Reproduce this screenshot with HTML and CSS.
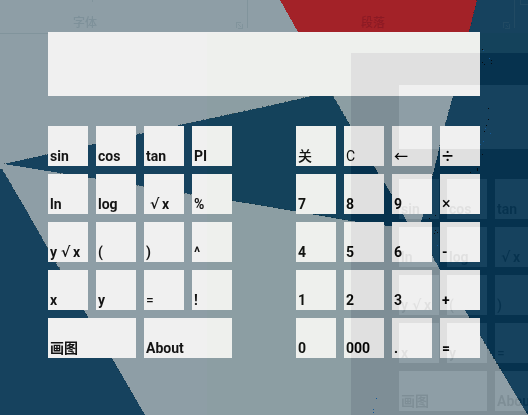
FILE: index.html
```html
<!DOCTYPE html>
<html lang="zh-CN">
<head>
<meta charset="utf-8">
<meta name="viewport" content="width=device-width, initial-scale=1">
<title>Calculator</title>
<link rel="stylesheet" href="styles.css">
</head>
<body>
<svg class="scene" viewBox="0 0 528 415" preserveAspectRatio="xMinYMin slice" aria-hidden="true">
  <rect class="haze" width="528" height="415"/>
  <g class="navy">
    <path d="M0 169H2L25 208L47 247L60 270L88 317L112 358L145 415H0Z"/>
    <path d="M4 164L180 125L264 107L312 96V80H324L333 96L350 125L378 173L392 195L403 214L417 240L391 226L385 225.500L351 221L264 206L190 194L142 186L60 173Z"/>
    <path d="M477 0L469 32L453 96L445 125L432 178L423 215L417 236V232L432 255L440 270L465 310L481 337L528 415V0Z"/>
  </g>
  <path class="red" d="M280 0L298 32L320 70H460L469 32L477 0Z"/>
  <g class="edge">
    <path d="M4 164L180 125L312 96M60 173L190 194L264 206L351 221M333 96L350 125L378 173L392 195"/>
    <path d="M477 0L469 32L453 96L445 125L432 178M432 255L440 270L465 310L481 337L528 415M2 169L47 247L88 317L145 415"/>
  </g>
  <g class="faint">
    <path d="M0 33.500H48M92.500 0V2M247.500 0V28M236.500 28V22.500H241M238 24L241 27M242.500 24V28.500H238"/>
    <path d="M514.500 0V28M503.500 28V22.500H509M506 25L508 27M509.500 24V28.500H505M520.500 0V4.500H528"/>
    <text x="73" y="27">字体</text>
  </g>
  <text class="on-red" x="361" y="27">段落</text>
</svg>

<main class="calc">
  <input class="display" type="text" aria-label="结果">
  <div class="pads">
    <div class="pad">
      <button class="key">sin</button><button class="key">cos</button><button class="key">tan</button><button class="key">PI</button>
      <button class="key">ln</button><button class="key">log</button><button class="key"><span class="root">√</span>x</button><button class="key">%</button>
      <button class="key">y<span class="root">√</span>x</button><button class="key">(</button><button class="key">)</button><button class="key">^</button>
      <button class="key">x</button><button class="key">y</button><button class="key regular">=</button><button class="key">!</button>
      <button class="key key-double han">画图</button><button class="key key-double">About</button>
    </div>
    <div class="pad numeric">
      <button class="key han">关</button><button class="key regular">C</button><button class="key han">←</button><button class="key large">÷</button>
      <button class="key">7</button><button class="key">8</button><button class="key">9</button><button class="key times">×</button>
      <button class="key">4</button><button class="key">5</button><button class="key">6</button><button class="key">-</button>
      <button class="key">1</button><button class="key">2</button><button class="key">3</button><button class="key">+</button>
      <button class="key">0</button><button class="key">000</button><button class="key">.</button><button class="key">=</button>
    </div>
  </div>
</main>

<svg class="scene tint" viewBox="0 0 528 415" preserveAspectRatio="xMinYMin slice" aria-hidden="true">
  <path d="M207 33H528V53H351V415H207Z"/>
</svg>

<div class="echo" aria-hidden="true">
  <div class="calc">
    <div class="display"></div>
    <div class="pads">
      <div class="pad">
        <span class="key">sin</span><span class="key">cos</span><span class="key">tan</span><span class="key"></span>
        <span class="key">ln</span><span class="key">log</span><span class="key"><span class="root">√</span>x</span><span class="key"></span>
        <span class="key">y<span class="root">√</span>x</span><span class="key">(</span><span class="key">)</span><span class="key"></span>
        <span class="key">x</span><span class="key">y</span><span class="key regular">=</span><span class="key"></span>
        <span class="key key-double han">画图</span><span class="key key-double">About</span>
      </div>
      <div class="pad"></div>
    </div>
  </div>
</div>

<svg class="scene specks" viewBox="0 0 528 415" preserveAspectRatio="xMinYMin slice" aria-hidden="true">
  <path class="dark" d="M482 49h1v1h-1zM482 62h1v1h-1zM484 64h1v1h-1zM491 60h1v1h-1zM491 63h1v1h-1zM488 108h1v1h-1zM488 119h1v1h-1zM486 125h1v1h-1zM484 131h1v1h-1zM482 154h1v1h-1zM477 168h1v3h-1zM470 172h1v1h-1zM435 215h1v1h-1zM429 218h1v1h-1zM435 230h1v1h-1zM437 232h1v1h-1zM434 233h1v1h-1z"/>
  <path class="blue" d="M483 50h1v1h-1zM489 58h1v1h-1zM485 128h1v1h-1zM490 133h1v1h-1zM483 141h1v1h-1zM480 144h1v1h-1zM437 245h1v1h-1zM376 398h1v1h-1zM373 409h1v1h-1zM373 412h1v1h-1z"/>
</svg>
</body>
</html>
```
FILE: styles.css
```css
* {
  box-sizing: border-box;
}

body {
  margin: 0;
  min-height: 100vh;
  position: relative;
  overflow: hidden;
  background: #8e9ea6;
  color: #141414;
  font: 700 14px/16px Roboto, "Noto Sans CJK SC", sans-serif;
}

.scene {
  position: absolute;
  inset: 0;
  width: 100%;
  height: 100%;
  pointer-events: none;
  shape-rendering: crispEdges;
}

.haze { fill: #8e9ea6; }
.navy { fill: #16425e; }
.red { fill: #a32228; }

.edge {
  fill: none;
  stroke: #10262c;
  stroke-opacity: 0.6;
  stroke-dasharray: 1 5;
}

.faint path {
  fill: none;
  stroke: #506c7a;
  stroke-opacity: 0.2;
}

.faint text,
.on-red {
  font: 500 12px "Noto Sans CJK SC", sans-serif;
  fill: #7e919a;
}

.on-red { fill: #8c1a24; }

.calc {
  position: relative;
  padding: 32px 48px;
}

.display {
  display: block;
  width: 100%;
  height: 64px;
  padding: 0 8px;
  border: 0;
  border-radius: 0;
  outline: 0;
  background: #f0f0f0;
  color: inherit;
  font: inherit;
}

.pads {
  display: flex;
  gap: 64px;
  margin-top: 30px;
}

.pad {
  flex: 1;
  display: grid;
  grid-template-columns: repeat(4, minmax(0, 1fr));
  grid-auto-rows: 40px;
  gap: 8px;
}

.key {
  display: flex;
  align-items: flex-end;
  padding: 0 2px 2px;
  border: 0;
  border-radius: 0;
  background: #f0f0f0;
  color: inherit;
  font: inherit;
  text-align: left;
  white-space: nowrap;
}

.key-double { grid-column: span 2; }

.root {
  width: 16px;
  padding-left: 4px;
  font: 700 14px/16px "DejaVu Sans", sans-serif;
}

.han {
  padding-bottom: 3px;
  font-family: "Noto Sans CJK SC", sans-serif;
  font-weight: 500;
}

.key-double.han { font-weight: 700; }

.regular { font-weight: 400; }

.times {
  font-size: 16px;
  font-weight: 500;
}

.large {
  font-size: 20px;
  font-weight: 400;
}

.tint {
  fill: #020003;
  mix-blend-mode: difference;
}

.echo {
  position: absolute;
  inset: 53px 0 0 351px;
  overflow: hidden;
  background: #101010;
  color: #101010;
  mix-blend-mode: difference;
  pointer-events: none;
}

.echo .calc { width: 100vw; }

.echo .display,
.echo .key {
  background: #000;
}

.dark { fill: #060a10; }
.blue { fill: #155a9a; }
```
